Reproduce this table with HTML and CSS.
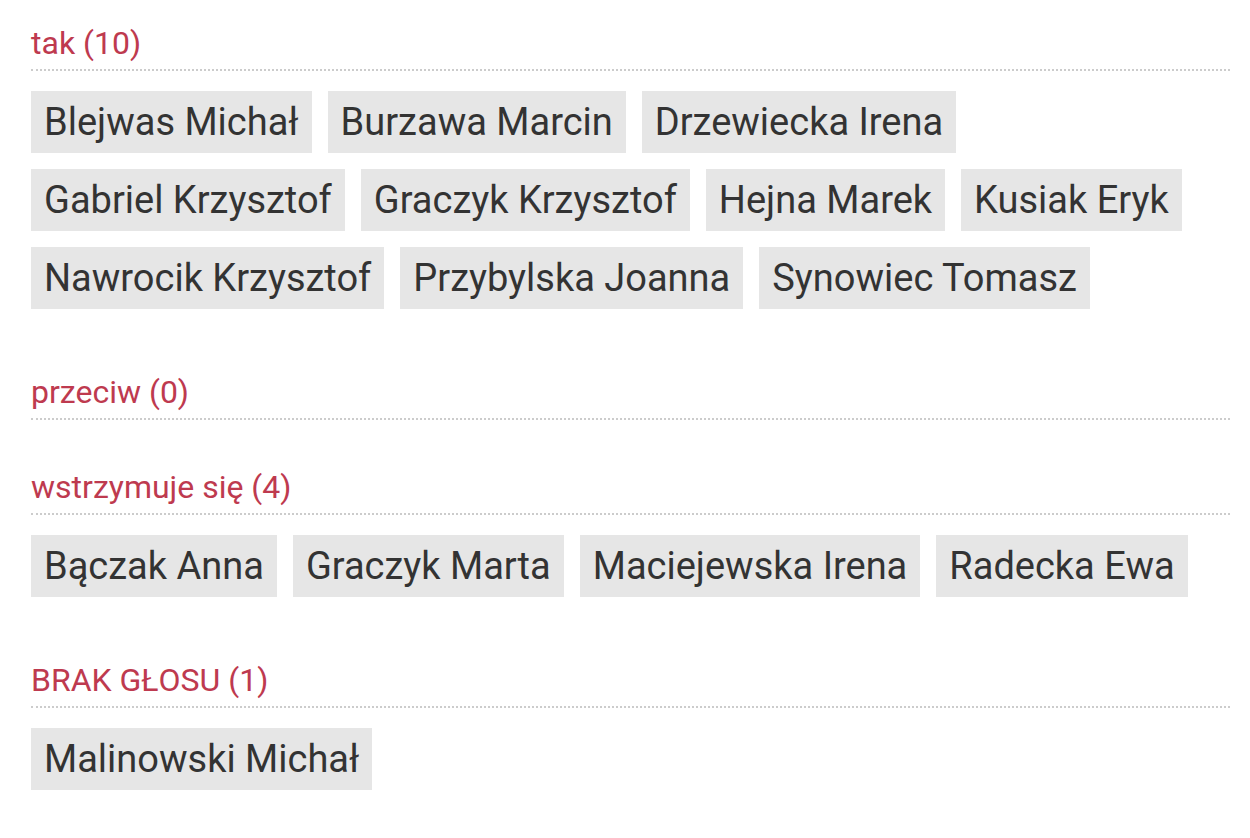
FILE: index.html
```html
<!DOCTYPE html>
<html lang="pl">
<head>
<meta charset="utf-8">
<link rel="stylesheet" href="styles.css">
</head>
<body>
<div class="votes">
  <section class="group">
    <h3 class="group-title">tak (10)</h3>
    <div class="tags">
      <span class="tag">Blejwas Michał</span>
      <span class="tag">Burzawa Marcin</span>
      <span class="tag">Drzewiecka Irena</span>
      <span class="tag">Gabriel Krzysztof</span>
      <span class="tag">Graczyk Krzysztof</span>
      <span class="tag">Hejna Marek</span>
      <span class="tag">Kusiak Eryk</span>
      <span class="tag">Nawrocik Krzysztof</span>
      <span class="tag">Przybylska Joanna</span>
      <span class="tag">Synowiec Tomasz</span>
    </div>
  </section>
  <section class="group">
    <h3 class="group-title">przeciw (0)</h3>
  </section>
  <section class="group">
    <h3 class="group-title">wstrzymuje się (4)</h3>
    <div class="tags">
      <span class="tag">Bączak Anna</span>
      <span class="tag">Graczyk Marta</span>
      <span class="tag">Maciejewska Irena</span>
      <span class="tag">Radecka Ewa</span>
    </div>
  </section>
  <section class="group">
    <h3 class="group-title">BRAK GŁOSU (1)</h3>
    <div class="tags">
      <span class="tag">Malinowski Michał</span>
    </div>
  </section>
</div>
</body>
</html>
```
FILE: styles.css
```css
html, body {
  margin: 0;
  padding: 0;
  background: #ffffff;
}
body {
  font-family: Roboto, "Liberation Sans", Arial, sans-serif;
  color: #333333;
}
.votes {
  padding: 24px 20px 0 31px;
}
.group {
  margin-bottom: 48px;
}
.group-title {
  margin: 0;
  padding: 1px 0 8px 0;
  font-size: 32px;
  line-height: 36px;
  font-weight: 400;
  color: #be3a4f;
  border-bottom: 2px dotted #cccccc;
}
.tags {
  display: flex;
  flex-wrap: wrap;
  column-gap: 16px;
  padding-top: 20px;
}
.tag {
  display: block;
  background: #e6e6e6;
  color: #333333;
  font-size: 38px;
  line-height: 62px;
  height: 62px;
  padding: 0 13px;
  margin-bottom: 16px;
  white-space: nowrap;
}
```
